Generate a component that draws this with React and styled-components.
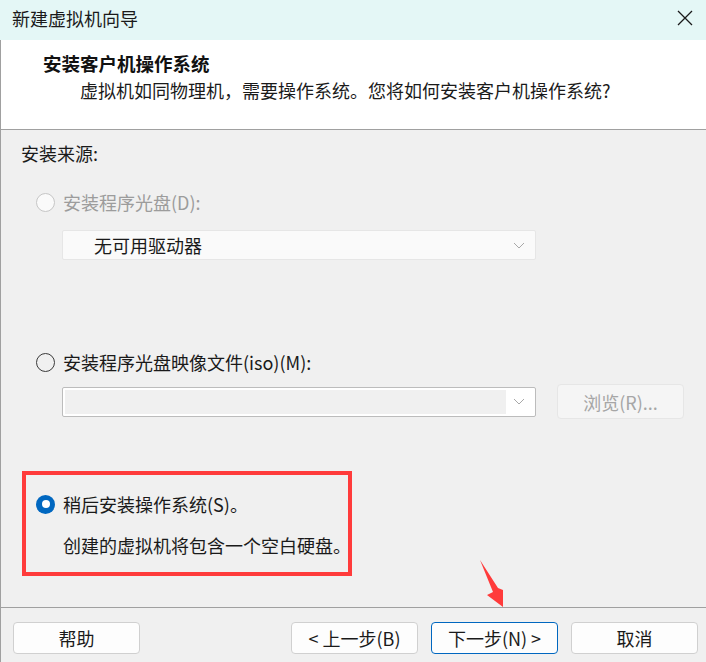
import React from "react";
import styled, { createGlobalStyle } from "styled-components";

const Global = createGlobalStyle`
  html, body { margin: 0; padding: 0; }
  body {
    width: 706px;
    height: 662px;
    overflow: hidden;
    background: #f0f0f0;
    font-family: "Noto Sans CJK SC", "Noto Sans", sans-serif;
    font-size: 18px;
    color: #1a1a1a;
  }
  * { box-sizing: border-box; }
`;

const Window = styled.div`
  position: relative;
  width: 706px;
  height: 662px;
  display: flex;
  flex-direction: column;
  background: #f0f0f0;
  white-space: nowrap;
`;

const TitleBar = styled.div`
  height: 40px;
  flex: none;
  background: #e4f7f6;
  display: flex;
  align-items: center;
  justify-content: space-between;
  padding: 0 12px 4px 12px;
`;

const TitleText = styled.div`
  font-size: 18px;
  line-height: 24px;
  color: #1a1a1a;
`;

const CloseButton = styled.div`
  width: 18px;
  height: 18px;
  display: flex;
  align-items: center;
  justify-content: center;
`;

const Frame = styled.div`
  flex: 1;
  display: flex;
  flex-direction: column;
  border-left: 1px solid #a0a0a0;
`;

const Header = styled.div`
  height: 90px;
  flex: none;
  background: #ffffff;
  border-bottom: 1px solid #a0a0a0;
  padding: 11px 0 0 42px;
`;

const Heading = styled.div`
  font-weight: 700;
  font-size: 18.5px;
  line-height: 24px;
  color: #111;
`;

const SubHeading = styled.div`
  margin-top: 3px;
  margin-left: 37px;
  font-size: 18px;
  line-height: 24px;
  color: #1a1a1a;
`;

const Body = styled.div`
  flex: 1;
  display: flex;
  flex-direction: column;
  padding: 11px 0 0 20px;
`;

const SectionLabel = styled.div`
  line-height: 24px;
`;

const RadioRow = styled.label`
  display: flex;
  align-items: center;
  gap: 8px;
  line-height: 24px;
  margin-top: ${(p) => p.$mt || 0}px;
  margin-left: ${(p) => p.$ml ?? 15}px;
  color: ${(p) => (p.$disabled ? "#9c9c9c" : "#1a1a1a")};
`;

const RadioDot = styled.span`
  width: 19px;
  height: 19px;
  flex: none;
  border-radius: 50%;
  position: relative;
  ${(p) =>
    p.$checked
      ? `background: #0067c0; border: none;`
      : p.$disabled
      ? `background: #fafafa; border: 1px solid #c6c6c6;`
      : `background: transparent; border: 1px solid #3a3a3a;`}
  &::after {
    content: "";
    display: ${(p) => (p.$checked ? "block" : "none")};
    position: absolute;
    left: 50%;
    top: 50%;
    width: 8px;
    height: 8px;
    margin: -4px 0 0 -4px;
    border-radius: 50%;
    background: #fff;
  }
`;

const Select = styled.div`
  width: 474px;
  height: 30px;
  margin-top: ${(p) => p.$mt || 0}px;
  margin-left: ${(p) => p.$ml || 0}px;
  display: flex;
  align-items: center;
  background: ${(p) => (p.$disabled ? "#fafafa" : "#ffffff")};
  border: 1px solid ${(p) => (p.$disabled ? "#e6e6e6" : "#bcbcbc")};
  border-radius: 2px;
  padding: 2px;
`;

const SelectValue = styled.div`
  flex: 1;
  height: 100%;
  display: flex;
  align-items: center;
  padding-left: 29px;
  line-height: 24px;
  color: #1a1a1a;
  background: ${(p) => (p.$field ? "#f0f0f0" : "transparent")};
`;

const Chevron = styled.div`
  width: 27px;
  flex: none;
  display: flex;
  align-items: center;
  justify-content: center;
  padding-right: 2px;
`;

const FileRow = styled.div`
  display: flex;
  align-items: center;
  gap: 21px;
  margin-top: 10px;
  margin-left: 41px;
`;

const Button = styled.div`
  width: 127px;
  height: ${(p) => p.$h || 32}px;
  display: flex;
  align-items: center;
  justify-content: center;
  border-radius: 4px;
  font-size: 18px;
  line-height: 24px;
  background: ${(p) => (p.$disabled ? "#f5f5f5" : "#fdfdfd")};
  border: 1px solid
    ${(p) => (p.$focused ? "#0067c0" : p.$disabled ? "#e6e6e6" : "#d0d0d0")};
  color: ${(p) => (p.$disabled ? "#a6a6a6" : "#1a1a1a")};
`;

const Highlight = styled.div`
  width: 330px;
  height: 105px;
  margin-top: 52px;
  margin-left: 1px;
  border: 4px solid #ff3b3b;
  padding: 17px 0 0 10px;
  display: flex;
  flex-direction: column;
`;

const Note = styled.div`
  margin-top: 17px;
  margin-left: 27px;
  line-height: 24px;
  white-space: nowrap;
`;

const Footer = styled.div`
  height: 55px;
  flex: none;
  border-top: 1px solid #a0a0a0;
  display: flex;
  align-items: flex-start;
  padding: 14px 8px 0 12px;
`;

const Spacer = styled.div`
  flex: 1;
`;

const ButtonGroup = styled.div`
  display: flex;
  gap: 13px;
`;

const ArrowMark = styled.svg`
  position: absolute;
  left: 476px;
  top: 556px;
  pointer-events: none;
`;

const ChevronIcon = () => (
  <svg width="12" height="7" viewBox="0 0 12 7">
    <polyline points="1,1 6,6 11,1" fill="none" stroke="#a8a8a8" strokeWidth="1" />
  </svg>
);

export default function App() {
  return (
    <>
      <Global />
      <Window>
        <TitleBar>
          <TitleText>新建虚拟机向导</TitleText>
          <CloseButton>
            <svg width="16" height="16" viewBox="0 0 16 16">
              <path d="M1 1 L15 15 M15 1 L1 15" stroke="#1a1a1a" strokeWidth="1.3" fill="none" />
            </svg>
          </CloseButton>
        </TitleBar>
        <Frame>
          <Header>
            <Heading>安装客户机操作系统</Heading>
            <SubHeading>虚拟机如同物理机，需要操作系统。您将如何安装客户机操作系统?</SubHeading>
          </Header>
          <Body>
            <SectionLabel>安装来源:</SectionLabel>
            <RadioRow $mt={25} $disabled>
              <RadioDot $disabled />
              安装程序光盘(D):
            </RadioRow>
            <Select $mt={16} $ml={41} $disabled>
              <SelectValue>无可用驱动器</SelectValue>
              <Chevron>
                <ChevronIcon />
              </Chevron>
            </Select>
            <RadioRow $mt={90}>
              <RadioDot />
              安装程序光盘映像文件(iso)(M):
            </RadioRow>
            <FileRow>
              <Select>
                <SelectValue $field />
                <Chevron>
                  <ChevronIcon />
                </Chevron>
              </Select>
              <Button $disabled $h={35}>浏览(R)...</Button>
            </FileRow>
            <Highlight>
              <RadioRow $ml={0}>
                <RadioDot $checked />
                稍后安装操作系统(S)。
              </RadioRow>
              <Note>创建的虚拟机将包含一个空白硬盘。</Note>
            </Highlight>
          </Body>
          <Footer>
            <Button>帮助</Button>
            <Spacer />
            <ButtonGroup>
              <Button>&lt; 上一步(B)</Button>
              <Button $focused>下一步(N) &gt;</Button>
              <Button>取消</Button>
            </ButtonGroup>
          </Footer>
        </Frame>
        <ArrowMark width="32" height="54" viewBox="0 0 32 54">
          <polygon points="4,4 22,32 27,34 27,51 11,39 17,36" fill="#ff3b3b" />
        </ArrowMark>
      </Window>
    </>
  );
}
